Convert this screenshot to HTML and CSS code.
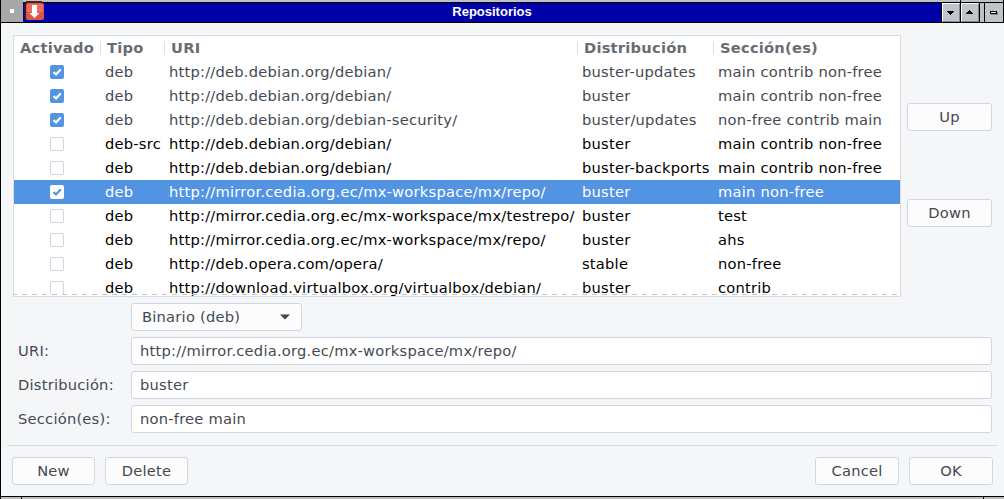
FILE: index.html
```
<!DOCTYPE html>
<html lang="es">
<head>
<meta charset="utf-8">
<title>Repositorios</title>
<link rel="stylesheet" href="styles.css">
</head>
<body>
<div class="window">
  <header class="titlebar">
    <div class="window-menu"><span class="menu-dot"></span></div>
    <div class="caption">
      <svg class="app-icon" width="20" height="20" viewBox="0 0 20 20">
        <rect x="0" y="1" width="19" height="18" rx="2" fill="#3c1420"/>
        <rect x="2" y="0" width="16" height="2" fill="#4a2424"/>
        <rect x="2" y="2" width="18" height="17" rx="2" fill="#d9554a"/>
        <rect x="3" y="3" width="16" height="8" rx="1" fill="#ea6f62"/>
        <path d="M8 4h5v8h2.500L10.500 17 5.500 12H8z" fill="#fff"/>
      </svg>
      <h1 class="title">Repositorios</h1>
    </div>
    <div class="tool"><svg width="18" height="19" shape-rendering="crispEdges"><path d="M0 18V0h17v1H1v17z" fill="#fff"/><path d="M18 1v18H1v-1h16V1z" fill="#85878c"/><path d="M5 8h7v1h-1v1h-1v1H9v1H8v-1H7v-1H6V9H5z"/></svg></div>
    <div class="tool"><svg width="18" height="19" shape-rendering="crispEdges"><path d="M0 18V0h17v1H1v17z" fill="#fff"/><path d="M18 1v18H1v-1h16V1z" fill="#85878c"/><path d="M8 7h1v1h1v1h1v1h1v1H5v-1h1V9h1V8h1z"/></svg></div>
    <div class="gutter"></div>
    <div class="tool"><svg width="18" height="19" shape-rendering="crispEdges"><path d="M6 9h7v3H6z" fill="#85878c"/><path d="M5 8h7v3H5z"/><path d="M6 9h5v1H6z" fill="#fff"/></svg></div>
  </header>
  <main class="content">
    <section class="upper">
      <div class="list">
        <div class="row head"><span>Activado</span><span>Tipo</span><span>URI</span><span>Distribución</span><span>Sección(es)</span></div>
        <div class="row muted"><span><i class="check on"><svg width="14" height="14"><path d="M3.500 7l2.500 2.500L10.800 4.200"/></svg></i></span><span>deb</span><span>http://deb.debian.org/debian/</span><span>buster-updates</span><span>main contrib non-free</span></div>
        <div class="row muted"><span><i class="check on"><svg width="14" height="14"><path d="M3.500 7l2.500 2.500L10.800 4.200"/></svg></i></span><span>deb</span><span>http://deb.debian.org/debian/</span><span>buster</span><span>main contrib non-free</span></div>
        <div class="row muted"><span><i class="check on"><svg width="14" height="14"><path d="M3.500 7l2.500 2.500L10.800 4.200"/></svg></i></span><span>deb</span><span>http://deb.debian.org/debian-security/</span><span>buster/updates</span><span>non-free contrib main</span></div>
        <div class="row"><span><i class="check"></i></span><span>deb-src</span><span>http://deb.debian.org/debian/</span><span>buster</span><span>main contrib non-free</span></div>
        <div class="row"><span><i class="check"></i></span><span>deb</span><span>http://deb.debian.org/debian/</span><span>buster-backports</span><span>main contrib non-free</span></div>
        <div class="row selected"><span><i class="check on"><svg width="14" height="14"><path d="M3.500 7l2.500 2.500L10.800 4.200"/></svg></i></span><span>deb</span><span>http://mirror.cedia.org.ec/mx-workspace/mx/repo/</span><span>buster</span><span>main non-free</span></div>
        <div class="row"><span><i class="check"></i></span><span>deb</span><span>http://mirror.cedia.org.ec/mx-workspace/mx/testrepo/</span><span>buster</span><span>test</span></div>
        <div class="row"><span><i class="check"></i></span><span>deb</span><span>http://mirror.cedia.org.ec/mx-workspace/mx/repo/</span><span>buster</span><span>ahs</span></div>
        <div class="row"><span><i class="check"></i></span><span>deb</span><span>http://deb.opera.com/opera/</span><span>stable</span><span>non-free</span></div>
        <div class="row"><span><i class="check"></i></span><span>deb</span><span>http://download.virtualbox.org/virtualbox/debian/</span><span>buster</span><span>contrib</span></div>
        <div class="overflow-hint"></div>
      </div>
      <div class="order">
        <button class="button">Up</button>
        <button class="button">Down</button>
      </div>
    </section>
    <section class="form">
      <span></span>
      <button class="button combo"><span>Binario (deb)</span><svg width="10" height="6"><path d="M0 .5h10L5 5.500z" fill="#3f434d"/></svg></button>
      <label for="uri">URI:</label><input class="entry" id="uri" value="http://mirror.cedia.org.ec/mx-workspace/mx/repo/">
      <label for="dist">Distribución:</label><input class="entry" id="dist" value="buster">
      <label for="sect">Sección(es):</label><input class="entry" id="sect" value="non-free main">
    </section>
    <footer class="actions">
      <button class="button">New</button>
      <button class="button">Delete</button>
      <span class="spacer"></span>
      <button class="button">Cancel</button>
      <button class="button">OK</button>
    </footer>
  </main>
  <div class="frame-bottom"><span></span><span></span><span></span></div>
</div>
</body>
</html>
```
FILE: styles.css
```
* { box-sizing: border-box; }
body { margin: 0; overflow: hidden; }
.window {
  width: 1004px; height: 499px;
  display: flex; flex-direction: column;
  border-left: 1px solid #000;
  background: #f5f6f8;
  color: #454952;
  font: 14.667px/24px "DejaVu Sans", sans-serif;
  letter-spacing: .235px;
}
.titlebar {
  height: 23px; flex: none;
  display: flex;
  background:
    linear-gradient(#000, #000) 959px 0 / 1px 2px no-repeat,
    linear-gradient(#000, #000) 1002px 0 / 1px 2px no-repeat,
    linear-gradient(#bfc1c5 2px, #000 2px, #000 3px, #bfc1c5 3px);
  border-bottom: 1px solid #000;
}
.window-menu {
  width: 22px; height: 22px;
  display: grid; place-items: center;
  background: #a8a8a8;
}
.menu-dot { width: 4px; height: 4px; background: #fff; }
.caption {
  flex: 1; height: 19px; margin-top: 3px;
  display: flex;
  background: #0000a8;
}
.app-icon { flex: none; margin: -2px 0 0 1px; }
.title {
  flex: 1; margin: 0 1px 0 0;
  text-align: center; letter-spacing: 0;
  color: #fff;
  font: bold 13px/18px "Liberation Sans", Arial, sans-serif;
}
.tool {
  width: 18px; height: 19px; margin-top: 3px;
  box-sizing: content-box;
  border-left: 1px solid #000;
  background: #c0c4ca;
}
.tool + .tool, .tool:last-child { border-right: 1px solid #000; }
.tool svg { display: block; }
.gutter { width: 4px; }

.content { flex: none; height: 473px; padding: 12px 11px 0 12px; }
.upper { display: flex; gap: 6px; height: 262px; }
.list {
  position: relative;
  width: 888px; height: 262px; overflow: hidden;
  border: 1px solid #d9dde3;
  background: #fff;
}
.row {
  height: 24px;
  display: grid; grid-template-columns: 87px 64px 413px 136px 186px;
  color: #000; white-space: nowrap;
}
.row span { padding-left: 4px; }
.row span:first-child { display: grid; place-items: center; padding: 0 1px 0 0; }
.row.muted { color: #454952; }
.row.selected { background: #5294e2; color: #fff; }
.row.head { color: #696d73; font-weight: bold; }
.row.head span, .row.head span:first-child {
  display: block; padding-left: 6px;
  background: linear-gradient(#dcdfe3, #dcdfe3) right 5px / 1px 14px no-repeat;
}
.row.head span:last-child { background: none; }
.check {
  display: block; width: 14px; height: 14px;
  border: 1px solid #cfd6e6; border-radius: 2px;
  background: #fff;
}
.check.on { border: 0; background: #5294e2; }
.check svg { display: block; fill: none; stroke: #fff; stroke-width: 2.2; }
.selected .check.on { background: #fff; }
.selected .check svg { stroke: #5294e2; }
.overflow-hint {
  position: absolute; left: 0; right: 0; bottom: 1px; height: 1px;
  background: repeating-linear-gradient(90deg, #c4c6c9 0 3px, #fff 3px 8px, #c4c6c9 8px 10px);
}
.order { width: 85px; display: flex; flex-direction: column; gap: 68px; padding-top: 68px; }
.button, .entry {
  height: 28px; margin: 0;
  border: 1px solid #cfd6e6; border-radius: 3px;
  background: #fcfcfc;
  color: #454952; font: inherit; line-height: 24px; letter-spacing: inherit;
}
.button { padding: 0; }
.entry { width: 100%; padding: 0 8px 2px; background: #fff; outline: 0; }

.form {
  display: grid; grid-template-columns: 113px 861px; gap: 6px 5px;
  margin-top: 6px;
  line-height: 28px;
}
.form label { padding-left: 5px; }
.combo { width: 171px; padding: 0 11px 0 10px; display: flex; align-items: center; justify-content: space-between; }

.actions {
  display: flex;
  margin: 12px -5px 0 -6px; padding: 11px 5px 0;
  border-top: 1px solid #d9dce1;
}
.actions .button { width: 84px; }
.actions .button:first-child { width: 83px; }
.actions .button + .button { margin-left: 10px; }
.actions .button:nth-child(2) { width: 83px; }
.spacer { flex: 1; }

.frame-bottom { height: 3px; display: flex; border-top: 1px solid #000; background: #bebebe; }
.frame-bottom span:first-child { width: 21px; border-right: 1px solid #000; }
.frame-bottom span:nth-child(2) { flex: 1; border-right: 1px solid #000; }
.frame-bottom span:last-child { width: 20px; }
```
